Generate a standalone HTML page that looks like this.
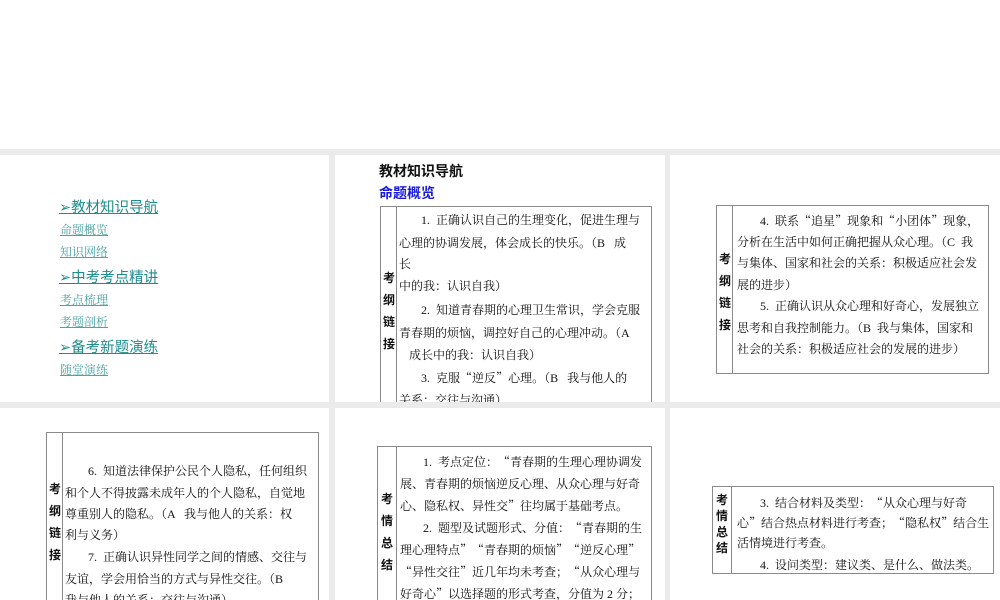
<!DOCTYPE html>
<html><head><meta charset="utf-8"><style>
*{margin:0;padding:0;box-sizing:border-box}
html,body{overflow:hidden}
body{width:1000px;height:600px;background:#fff;position:relative;font-family:"Liberation Serif","Noto Serif CJK SC",serif;color:#111}
.g{position:absolute;background:#ebebeb}
.s{position:absolute;background:#fff;overflow:hidden}
.t{position:absolute;border:1px solid #8a8a8a}
.d{position:absolute;top:0;bottom:0;border-left:1px solid #8a8a8a}
.l{position:absolute;white-space:nowrap;font-size:12px;line-height:14px}
.l q{quotes:none;font-family:"Noto Serif CJK SC",serif}
.k{position:absolute;font-size:12px;font-weight:bold;line-height:22px;width:14px;text-align:center;font-family:"Liberation Sans","Noto Sans CJK SC",sans-serif}
.h{position:absolute;white-space:nowrap;font-family:"Liberation Sans","Noto Sans CJK SC",sans-serif;color:#1f8c8c;font-size:14.5px;text-decoration:underline}
.sub{position:absolute;white-space:nowrap;color:#4ea3a3;font-size:12px;text-decoration:underline}
</style></head><body>
<div class="g" style="left:0;top:149px;width:1000px;height:451px"></div>
<div class="s" style="left:0;top:155px;width:329px;height:247px"></div>
<div class="h" style="left:59px;top:196px">➢教材知识导航</div>
<div class="sub" style="left:60px;top:221px">命题概览</div>
<div class="sub" style="left:60px;top:243px">知识网络</div>
<div class="h" style="left:59px;top:266px">➢中考考点精讲</div>
<div class="sub" style="left:60px;top:291px">考点梳理</div>
<div class="sub" style="left:60px;top:313px">考题剖析</div>
<div class="h" style="left:59px;top:336px">➢备考新题演练</div>
<div class="sub" style="left:60px;top:361px">随堂演练</div>
<div class="s" style="left:335px;top:155px;width:330px;height:247px">
<div style="position:absolute;left:44px;top:6px;font:bold 14px 'Liberation Sans','Noto Sans CJK SC',sans-serif">教材知识导航</div>
<div style="position:absolute;left:44px;top:28px;font:bold 14px 'Liberation Sans','Noto Sans CJK SC',sans-serif;color:#1a1ae0">命题概览</div>
<div class="t" style="left:45px;top:51px;width:272px;height:220px"><div class="d" style="left:15px"></div></div>
<div class="k" style="left:47px;top:112px">考<br>纲<br>链<br>接</div>
<div class="l" style="left:86px;top:58px">1.&nbsp; 正确认识自己的生理变化，促进生理与</div>
<div class="l" style="left:64px;top:81px">心理的协调发展，体会成长的快乐。（B &nbsp; 成</div>
<div class="l" style="left:64px;top:102px">长</div>
<div class="l" style="left:64px;top:124px">中的我：认识自我）</div>
<div class="l" style="left:86px;top:148px">2.&nbsp; 知道青春期的心理卫生常识，学会克服</div>
<div class="l" style="left:64px;top:171px">青春期的烦恼，调控好自己的心理冲动。（A</div>
<div class="l" style="left:74px;top:193px">成长中的我：认识自我）</div>
<div class="l" style="left:86px;top:216px">3.&nbsp; 克服<q>“</q>逆反<q>”</q>心理。（B &nbsp; 我与他人的</div>
<div class="l" style="left:64px;top:238px">关系：交往与沟通）</div>
</div>
<div class="s" style="left:670px;top:155px;width:330px;height:247px">
<div class="t" style="left:46px;top:50px;width:273px;height:169px"><div class="d" style="left:15px"></div></div>
<div class="k" style="left:48px;top:93px">考<br>纲<br>链<br>接</div>
<div class="l" style="left:90px;top:59px">4.&nbsp; 联系<q>“</q>追星<q>”</q>现象和<q>“</q>小团体<q>”</q>现象，</div>
<div class="l" style="left:67px;top:80px">分析在生活中如何正确把握从众心理。（C &nbsp;我</div>
<div class="l" style="left:67px;top:101px">与集体、国家和社会的关系：积极适应社会发</div>
<div class="l" style="left:67px;top:123px">展的进步）</div>
<div class="l" style="left:90px;top:144px">5.&nbsp; 正确认识从众心理和好奇心，发展独立</div>
<div class="l" style="left:67px;top:166px">思考和自我控制能力。（B &nbsp;我与集体，国家和</div>
<div class="l" style="left:67px;top:187px">社会的关系：积极适应社会的发展的进步）</div>
</div>
<div class="s" style="left:0;top:408px;width:329px;height:192px">
<div class="t" style="left:46px;top:24px;width:273px;height:200px"><div class="d" style="left:15px"></div></div>
<div class="k" style="left:48px;top:70px">考<br>纲<br>链<br>接</div>
<div class="l" style="left:88px;top:56px">6.&nbsp; 知道法律保护公民个人隐私，任何组织</div>
<div class="l" style="left:65px;top:78px">和个人不得披露未成年人的个人隐私，自觉地</div>
<div class="l" style="left:65px;top:99px">尊重别人的隐私。（A &nbsp; 我与他人的关系：权</div>
<div class="l" style="left:65px;top:120px">利与义务）</div>
<div class="l" style="left:88px;top:142px">7.&nbsp; 正确认识异性同学之间的情感、交往与</div>
<div class="l" style="left:65px;top:164px">友谊，学会用恰当的方式与异性交往。（B</div>
<div class="l" style="left:65px;top:185px">我与他人的关系：交往与沟通）</div>
</div>
<div class="s" style="left:335px;top:408px;width:330px;height:192px">
<div class="t" style="left:42px;top:38px;width:275px;height:200px"><div class="d" style="left:18px"></div></div>
<div class="k" style="left:45px;top:80px">考<br>情<br>总<br>结</div>
<div class="l" style="left:88px;top:47px">1.&nbsp; 考点定位：<q>“</q>青春期的生理心理协调发</div>
<div class="l" style="left:65px;top:69px">展、青春期的烦恼逆反心理、从众心理与好奇</div>
<div class="l" style="left:65px;top:91px">心、隐私权、异性交<q>”</q>往均属于基础考点。</div>
<div class="l" style="left:88px;top:113px">2.&nbsp; 题型及试题形式、分值：<q>“</q>青春期的生</div>
<div class="l" style="left:65px;top:135px">理心理特点<q>”“</q>青春期的烦恼<q>”“</q>逆反心理<q>”</q></div>
<div class="l" style="left:65px;top:157px"><q>“</q>异性交往<q>”</q>近几年均未考查；<q>“</q>从众心理与</div>
<div class="l" style="left:65px;top:179px">好奇心<q>”</q>以选择题的形式考查，分值为 2 分；</div>
<div class="l" style="left:65px;top:200px"><q>“</q>隐私权<q>”</q>以情境探究题的形式呈现，分值为</div>
</div>
<div class="s" style="left:670px;top:408px;width:330px;height:192px">
<div class="t" style="left:42px;top:78px;width:282px;height:88px"><div class="d" style="left:18px"></div></div>
<div class="k" style="left:45px;top:84px;line-height:16px">考<br>情<br>总<br>结</div>
<div class="l" style="left:90px;top:88px">3.&nbsp; 结合材料及类型：<q>“</q>从众心理与好奇</div>
<div class="l" style="left:67px;top:108px">心<q>”</q>结合热点材料进行考查；<q>“</q>隐私权<q>”</q>结合生</div>
<div class="l" style="left:67px;top:128px">活情境进行考查。</div>
<div class="l" style="left:90px;top:150px">4.&nbsp; 设问类型：建议类、是什么、做法类。</div>
</div>
</body></html>
